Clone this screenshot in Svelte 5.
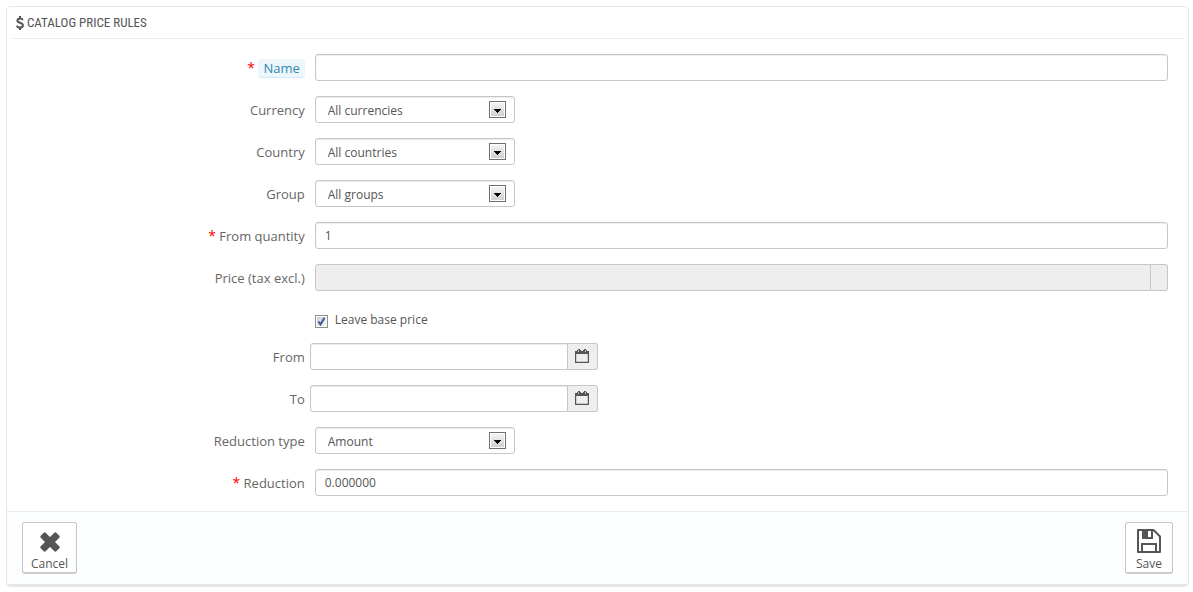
<script>
  let name = $state('');
  let quantity = $state('1');
  let price = $state('');
  let leaveBase = $state(true);
  let from = $state('');
  let to = $state('');
  let reduction = $state('0.000000');
</script>

{#snippet dropdown(id, label, options)}
  <div class="row">
    <label class="label" for={id}>{label}</label>
    <div class="field">
      <div class="select">
        <select {id}>
          {#each options as option}<option>{option}</option>{/each}
        </select>
        <svg class="arrow" width="17" height="17" viewBox="0 0 17 17" aria-hidden="true">
          <defs>
            <linearGradient id="{id}-face" x1="0" y1="0" x2="0" y2="1">
              <stop offset="0" stop-color="#f4f4f4" />
              <stop offset="1" stop-color="#cfcfcf" />
            </linearGradient>
          </defs>
          <rect x="0.5" y="0.5" width="16" height="16" fill="#fff" stroke="#707070" />
          <rect x="2" y="2" width="13" height="13" fill="url(#{id}-face)" />
          <path d="M5 8h7v1h-1v1h-1v1h-1v1h-1v-1h-1v-1h-1v-1h-1z" fill="#000" />
        </svg>
      </div>
    </div>
  </div>
{/snippet}

{#snippet calendar()}
  <svg width="14" height="15" viewBox="0 0 14 15" aria-hidden="true">
    <path d="M0.600 3v10.400h12.800V3" fill="none" stroke="#555" stroke-width="1.200" stroke-linejoin="round" />
    <path d="M0 2h2V1h1V0h2v1h1v1h2V1h1V0h2v1h1v1h2v3H0z" fill="#555" />
    <path d="M3.500 1v2M10.500 1v2" stroke="#a9c4dc" />
  </svg>
{/snippet}

<form class="panel" onsubmit={(e) => e.preventDefault()}>
  <h3>
    <svg width="8" height="14" viewBox="0 0 8 13" preserveAspectRatio="none" aria-hidden="true">
      <path d="M7 3.600C6.200 2.700 5.200 2.300 4 2.300C2.500 2.300 1.400 3 1.400 4.200C1.400 6.900 6.900 5.700 6.900 8.600C6.900 9.900 5.700 10.700 4 10.700C2.700 10.700 1.500 10.200 0.700 9.200M4 0v2.500M4 10.500V13" fill="none" stroke="#555" stroke-width="2" />
    </svg>
    Catalog price rules
  </h3>

  <div class="body">
    <div class="row">
      <label class="label" for="name"><span class="star">*</span> <span class="hint">Name</span></label>
      <div class="field"><input id="name" class="text" type="text" bind:value={name} /></div>
    </div>

    {@render dropdown('currency', 'Currency', ['All currencies'])}
    {@render dropdown('country', 'Country', ['All countries'])}
    {@render dropdown('group', 'Group', ['All groups'])}

    <div class="row">
      <label class="label" for="quantity"><span class="star">*</span> From quantity</label>
      <div class="field"><input id="quantity" class="text" type="text" bind:value={quantity} /></div>
    </div>

    <div class="row">
      <label class="label" for="price">Price (tax excl.)</label>
      <div class="field group">
        <input id="price" class="text" type="text" disabled={leaveBase} bind:value={price} />
        <span class="addon slim"></span>
      </div>
    </div>

    <div class="row">
      <div class="field check">
        <input id="leave" type="checkbox" bind:checked={leaveBase} />
        <label for="leave">Leave base price</label>
      </div>
    </div>

    <div class="row">
      <label class="label" for="from">From</label>
      <div class="date group">
        <input id="from" class="text" type="text" bind:value={from} />
        <span class="addon">{@render calendar()}</span>
      </div>
    </div>

    <div class="row">
      <label class="label" for="to">To</label>
      <div class="date group">
        <input id="to" class="text" type="text" bind:value={to} />
        <span class="addon">{@render calendar()}</span>
      </div>
    </div>

    {@render dropdown('type', 'Reduction type', ['Amount', 'Percentage'])}

    <div class="row">
      <label class="label" for="reduction"><span class="star">*</span> Reduction</label>
      <div class="field"><input id="reduction" class="text" type="text" bind:value={reduction} /></div>
    </div>
  </div>

  <footer>
    <button type="button">
      <svg width="30" height="30" viewBox="0 0 30 30" aria-hidden="true">
        <g transform="rotate(45 15 15)" fill="#555">
          <rect x="11.500" y="4" width="7" height="22" rx="1.400" />
          <rect x="4" y="11.500" width="22" height="7" rx="1.400" />
        </g>
      </svg>
      Cancel
    </button>
    <button type="submit">
      <svg width="30" height="30" viewBox="0 0 30 30" aria-hidden="true">
        <path d="M4 3h15.500L26 9.500V25H4z" fill="none" stroke="#555" stroke-width="2" stroke-linejoin="round" />
        <path d="M8 3h11v9H8z" fill="#555" />
        <path d="M14 4h3v6h-3z" fill="#fff" />
        <path d="M8 25v-8h14v8" fill="none" stroke="#555" stroke-width="2" />
      </svg>
      Save
    </button>
  </footer>
</form>

<style>
  :global(body) {
    background: #fff;
  }

  .panel,
  .panel * {
    box-sizing: border-box;
  }

  .panel {
    margin: 6px 4px 6px 6px;
    border: 1px solid #e6e6e6;
    border-bottom: 3px solid #e6e6e6;
    border-radius: 5px;
    background: #fff;
    font: 12px/17px "Open Sans", sans-serif;
    color: #555;
    overflow: hidden;
  }

  h3 {
    display: flex;
    align-items: center;
    gap: 3px;
    height: 32px;
    margin: 0 4px;
    padding: 0 5px;
    border-bottom: 1px solid #eee;
    font: 400 13px/32px "Ubuntu Condensed", "Roboto Condensed", "Open Sans Condensed", sans-serif;
    text-transform: uppercase;
  }

  .body {
    display: flex;
    flex-direction: column;
    gap: 15px;
    padding: 15px;
  }

  .row {
    display: flex;
  }

  .label {
    width: 25%;
    padding: 5px 5px 0 0;
    font-size: 13px;
    line-height: 18px;
    text-align: right;
    color: #666;
  }

  .star {
    color: #f00;
    font-size: 14px;
  }

  .hint {
    display: inline-block;
    padding: 0 5px;
    border-bottom: 1px solid #d0e9f8;
    border-radius: 3px;
    background: #edf7fb;
    color: #2f88b0;
  }

  .field {
    width: 75%;
    padding: 0 5px;
  }

  .text {
    display: block;
    width: 100%;
    min-width: 0;
    height: 27px;
    padding: 0 9px;
    border: 1px solid #c7c7c7;
    border-radius: 3px;
    background: #fff;
    box-shadow: inset 0 1px 1px #ececec;
    font: inherit;
    color: #555;
  }

  .text:disabled {
    background: #eee;
    box-shadow: none;
  }

  .group {
    display: flex;
  }

  .group .text {
    flex: 1;
    border-radius: 3px 0 0 3px;
  }

  .addon {
    display: flex;
    align-items: center;
    justify-content: center;
    width: 30px;
    border: 1px solid #c7c7c7;
    border-left: 0;
    border-radius: 0 3px 3px 0;
    background: #eee;
  }

  .slim {
    width: 17px;
  }

  .date {
    width: 25%;
  }

  .select {
    position: relative;
    width: 200px;
  }

  select {
    display: block;
    width: 100%;
    height: 27px;
    padding: 2px 32px 0 12px;
    border: 1px solid #c7c7c7;
    border-radius: 3px;
    appearance: none;
    background: #fff;
    box-shadow: inset 0 1px 1px #ececec;
    font: inherit;
    color: #555;
  }

  .arrow {
    position: absolute;
    top: 5px;
    right: 9px;
    pointer-events: none;
  }

  .check {
    display: flex;
    align-items: flex-start;
    gap: 7px;
    height: 22px;
    margin-left: 25%;
    padding-top: 5px;
  }

  .check input {
    appearance: none;
    width: 13px;
    height: 13px;
    margin: 4px 0 0;
    border: 1px solid #8e8f8f;
    background: linear-gradient(135deg, #c9cfd6, #f6f6f6) content-box #f4f4f4;
    padding: 1px;
  }

  .check input:checked {
    background:
      url("data:image/svg+xml,%3Csvg xmlns='http://www.w3.org/2000/svg' viewBox='0 0 11 11'%3E%3Cpath d='M2.500 5.500L4.500 8.500L8.500 1.800' fill='none' stroke='%233f5796' stroke-width='2'/%3E%3C/svg%3E") center / 11px 11px no-repeat,
      linear-gradient(135deg, #c9cfd6, #f6f6f6) content-box #f4f4f4;
  }

  footer {
    display: flex;
    justify-content: space-between;
    padding: 10px 15px;
    border-top: 1px solid #e8eaec;
    background: #fcfdfe;
  }

  button {
    display: flex;
    flex-direction: column;
    align-items: center;
    height: 52px;
    padding: 4px 8px 0;
    border: 1px solid #c7c7c7;
    border-bottom: 2px solid #ccc;
    border-radius: 3px;
    background: #fff;
    font: inherit;
    font-size: 12px;
    line-height: 14px;
    color: #555;
  }
</style>
